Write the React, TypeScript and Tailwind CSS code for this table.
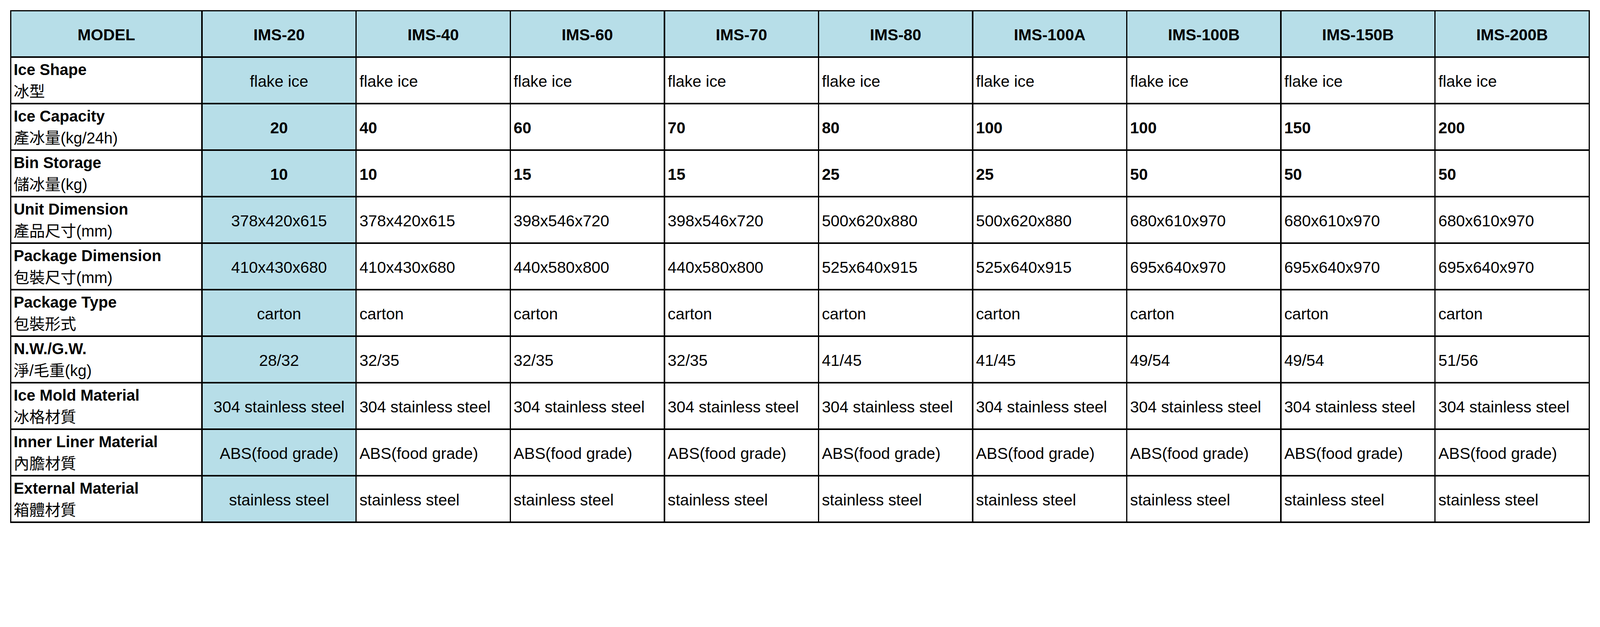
import React from "react";

type Row = {
  en: string;
  zh: string;
  values: string[];
  bold?: boolean;
};

const models = [
  "IMS-20",
  "IMS-40",
  "IMS-60",
  "IMS-70",
  "IMS-80",
  "IMS-100A",
  "IMS-100B",
  "IMS-150B",
  "IMS-200B",
];

const repeat = (v: string) => Array(9).fill(v);

const rows: Row[] = [
  { en: "Ice Shape", zh: "冰型", values: repeat("flake ice") },
  {
    en: "Ice Capacity",
    zh: "產冰量(kg/24h)",
    values: ["20", "40", "60", "70", "80", "100", "100", "150", "200"],
    bold: true,
  },
  {
    en: "Bin Storage",
    zh: "儲冰量(kg)",
    values: ["10", "10", "15", "15", "25", "25", "50", "50", "50"],
    bold: true,
  },
  {
    en: "Unit Dimension",
    zh: "產品尺寸(mm)",
    values: [
      "378x420x615",
      "378x420x615",
      "398x546x720",
      "398x546x720",
      "500x620x880",
      "500x620x880",
      "680x610x970",
      "680x610x970",
      "680x610x970",
    ],
  },
  {
    en: "Package Dimension",
    zh: "包裝尺寸(mm)",
    values: [
      "410x430x680",
      "410x430x680",
      "440x580x800",
      "440x580x800",
      "525x640x915",
      "525x640x915",
      "695x640x970",
      "695x640x970",
      "695x640x970",
    ],
  },
  { en: "Package Type", zh: "包裝形式", values: repeat("carton") },
  {
    en: "N.W./G.W.",
    zh: "淨/毛重(kg)",
    values: ["28/32", "32/35", "32/35", "32/35", "41/45", "41/45", "49/54", "49/54", "51/56"],
  },
  { en: "Ice Mold Material", zh: "冰格材質", values: repeat("304 stainless steel") },
  { en: "Inner Liner Material", zh: "內膽材質", values: repeat("ABS(food grade)") },
  { en: "External Material", zh: "箱體材質", values: repeat("stainless steel") },
];

const App: React.FC = () => {
  return (
    <div className="h-screen overflow-hidden bg-white p-[25.5px] font-['Liberation_Sans','Noto_Sans_CJK_TC',Arial,sans-serif] text-black">
      <div className="grid w-fit grid-cols-[486.5px_repeat(9,391.2px)] auto-rows-[115.6px] gap-[3.4px] bg-black p-[3.4px]">
        {/* header */}
        <div className="flex items-center justify-center bg-[#b7dee8] pt-[6.8px] text-[40.8px] font-bold">
          MODEL
        </div>
        {models.map((m) => (
          <div
            key={m}
            className="flex items-center justify-center bg-[#b7dee8] pt-[6.8px] text-[40.8px] font-bold whitespace-nowrap"
          >
            {m}
          </div>
        ))}

        {rows.map((row) => (
          <React.Fragment key={row.en}>
            <div className="flex flex-col justify-center bg-white pl-[6px] text-[40px] leading-[56px] whitespace-nowrap">
              <span className="font-bold">{row.en}</span>
              <span>{row.zh}</span>
            </div>
            {row.values.map((v, i) =>
              i === 0 ? (
                <div
                  key={i}
                  className={`flex items-center justify-center bg-[#b7dee8] pt-[6.8px] text-[40.8px] whitespace-nowrap ${
                    row.bold ? "font-bold" : ""
                  }`}
                >
                  {v}
                </div>
              ) : (
                <div
                  key={i}
                  className={`flex items-center bg-white pl-[6.8px] pt-[6.8px] text-[40.8px] whitespace-nowrap ${
                    row.bold ? "font-bold" : ""
                  }`}
                >
                  {v}
                </div>
              )
            )}
          </React.Fragment>
        ))}
      </div>
    </div>
  );
};

export default App;
